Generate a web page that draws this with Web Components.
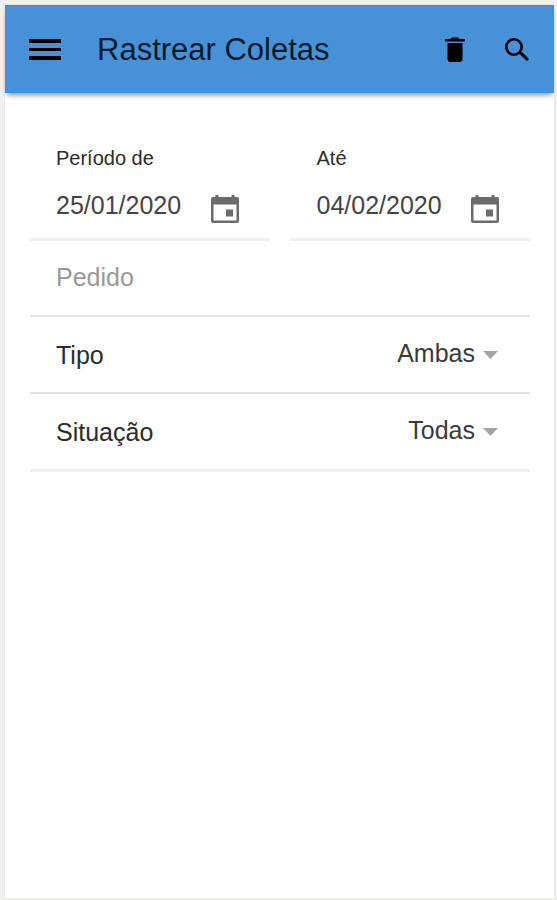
<!DOCTYPE html>
<html lang="pt-BR">
<head>
<meta charset="utf-8">
<meta name="viewport" content="width=device-width, initial-scale=1">
<title>Rastrear Coletas</title>
<style>
  body {
    margin: 0;
    background: #f1f1f0;
    font-family: "Liberation Sans", Arial, sans-serif;
    color: #2b2b2b;
  }
</style>
</head>
<body>
<app-page>
  <app-toolbar slot="header">Rastrear Coletas</app-toolbar>
  <field-row>
    <date-field label="Período de" value="25/01/2020"></date-field>
    <date-field label="Até" value="04/02/2020"></date-field>
  </field-row>
  <text-field label="Pedido"></text-field>
  <select-field label="Tipo" options="Ambas,Coleta,Entrega"></select-field>
  <select-field label="Situação" options="Todas,Pendente,Concluída" last></select-field>
</app-page>

<script>
class AppPage extends HTMLElement {
  constructor() {
    super();
    this.attachShadow({ mode: "open" });
    this.shadowRoot.innerHTML = `
      <style>
        :host {
          display: flex;
          flex-direction: column;
          box-sizing: border-box;
          min-height: 100vh;
          padding: 5px 3px 2px 5px;
        }

        .page {
          flex: 1;
          background: #fff;
          box-shadow: 0 0 2px #ddd;
        }

        main {
          padding: 48px 24px 24px 25px;
        }
      </style>
      <div class="page">
        <slot name="header"></slot>
        <main><slot></slot></main>
      </div>
    `;
  }
}

class AppToolbar extends HTMLElement {
  constructor() {
    super();
    this.attachShadow({ mode: "open" });
    this.shadowRoot.innerHTML = `
      <style>
        :host {
          display: block;
        }

        header {
          display: flex;
          align-items: center;
          box-sizing: border-box;
          height: 88px;
          padding: 0 18px 0 16px;
          background: #4792d7;
          border-top: 1px solid #338bd0;
          box-shadow: 0 4px 5px -2px rgba(0, 0, 0, 0.45);
          color: #071a2b;
        }

        h1 {
          flex: 1;
          margin: 0 0 0 30px;
          font-size: 31px;
          font-weight: 400;
        }

        button {
          display: flex;
          padding: 6px;
          border: 0;
          background: none;
          color: #000;
          cursor: pointer;
        }

        .search {
          margin-left: 27px;
        }

        svg {
          display: block;
          fill: currentColor;
        }
      </style>
      <header>
        <button aria-label="Menu">
          <svg width="34" height="24" viewBox="0 0 34 24">
            <path d="M2 1h32v4H2zM2 10h32v3H2zM2 18h32v4H2z"/>
          </svg>
        </button>
        <h1><slot></slot></h1>
        <button aria-label="Limpar">
          <svg width="20" height="26" viewBox="0 0 20 26">
            <path d="M0 2h5.500l1.500-1.500h6L14.500 2H20v2.500H0zM2.500 6h15V22q0 3-3 3h-9q-3 0-3-3z"/>
          </svg>
        </button>
        <button class="search" aria-label="Buscar">
          <svg width="26" height="26" viewBox="0 0 26 26">
            <circle cx="10" cy="10" r="7.700" fill="none" stroke="currentColor" stroke-width="2.600"/>
            <path d="M15 16.700l1.800-1.800 1.500.3 6.700 6.900-2 2-7-6.700z"/>
          </svg>
        </button>
      </header>
    `;
  }
}

class FieldRow extends HTMLElement {
  constructor() {
    super();
    this.attachShadow({ mode: "open" });
    this.shadowRoot.innerHTML = `
      <style>
        :host {
          display: flex;
          gap: 21px;
        }

        ::slotted(*) {
          flex: 1;
          min-width: 0;
        }
      </style>
      <slot></slot>
    `;
  }
}

class DateField extends HTMLElement {
  constructor() {
    super();
    this.attachShadow({ mode: "open" });
    this.shadowRoot.innerHTML = `
      <style>
        :host {
          display: block;
          box-sizing: border-box;
          padding: 5px 26px 12px;
          border-bottom: 3px solid #f0f0f0;
        }

        label {
          display: block;
          font-size: 20px;
          line-height: 24px;
        }

        .line {
          display: flex;
          align-items: center;
          margin-top: 22px;
        }

        input {
          flex: 1;
          min-width: 0;
          height: 34px;
          padding: 0 0 8px;
          border: 0;
          outline: 0;
          background: none;
          font: inherit;
          font-size: 25px;
          color: #444;
          box-sizing: border-box;
        }

        button {
          margin-right: 4px;
          padding: 0;
          border: 0;
          background: none;
          color: #6b6b6b;
          cursor: pointer;
        }

        svg {
          display: block;
        }
      </style>
      <label for="date"></label>
      <div class="line">
        <input type="text" id="date">
        <button aria-label="Abrir calendário">
          <svg width="30" height="30" viewBox="0 0 30 30" fill="currentColor">
            <path fill-rule="evenodd" d="M5.500 1h3v2h13V1h3v2H27q2 0 2 2v22q0 2-2 2H3q-2 0-2-2V5q0-2 2-2h2.500zM3.500 10.500v16h23v-16z"/>
            <path d="M16 15.500h7v7h-7z"/>
          </svg>
        </button>
      </div>
    `;
    this.shadowRoot.querySelector("label").textContent = this.getAttribute("label");
    this.shadowRoot.querySelector("input").value = this.getAttribute("value");
  }
}

class TextField extends HTMLElement {
  constructor() {
    super();
    this.attachShadow({ mode: "open" });
    this.shadowRoot.innerHTML = `
      <style>
        :host {
          display: flex;
          box-sizing: border-box;
          height: 76px;
          padding: 0 26px;
          border-bottom: 2px solid #e4e4e4;
        }

        input {
          flex: 1;
          min-width: 0;
          padding: 0 0 2px;
          border: 0;
          outline: 0;
          background: none;
          font: inherit;
          font-size: 25px;
          color: #2b2b2b;
        }

        input::placeholder {
          color: #999;
          opacity: 1;
        }
      </style>
      <input type="text">
    `;
    const input = this.shadowRoot.querySelector("input");
    input.placeholder = this.getAttribute("label");
    input.setAttribute("aria-label", this.getAttribute("label"));
  }
}

class SelectField extends HTMLElement {
  constructor() {
    super();
    this.attachShadow({ mode: "open" });
    this.shadowRoot.innerHTML = `
      <style>
        :host {
          display: flex;
          align-items: center;
          box-sizing: border-box;
          height: 77px;
          padding: 0 32px 0 26px;
          border-bottom: 2px solid #e2e2e2;
          font-size: 25px;
        }

        :host([last]) {
          height: 78px;
          border-bottom: 3px solid #f0f0f0;
        }

        label {
          padding-top: 2px;
        }

        .choice {
          flex: 1;
          display: flex;
          align-items: center;
          gap: 8px;
          padding-bottom: 4px;
        }

        select {
          flex: 1;
          min-width: 0;
          appearance: none;
          padding: 0;
          border: 0;
          outline: 0;
          background: none;
          font: inherit;
          color: #3a3a3a;
          text-align-last: right;
          cursor: pointer;
        }

        svg {
          margin-top: 4px;
          fill: #a3a3a3;
          pointer-events: none;
        }
      </style>
      <label for="choice"></label>
      <div class="choice">
        <select id="choice"></select>
        <svg width="15" height="8" viewBox="0 0 15 8"><path d="M0 0h15L7.500 8z"/></svg>
      </div>
    `;
    this.shadowRoot.querySelector("label").textContent = this.getAttribute("label");
    const select = this.shadowRoot.querySelector("select");
    this.getAttribute("options").split(",").forEach((name) => {
      select.add(new Option(name));
    });
  }
}

customElements.define("app-page", AppPage);
customElements.define("app-toolbar", AppToolbar);
customElements.define("field-row", FieldRow);
customElements.define("date-field", DateField);
customElements.define("text-field", TextField);
customElements.define("select-field", SelectField);
</script>
</body>
</html>
